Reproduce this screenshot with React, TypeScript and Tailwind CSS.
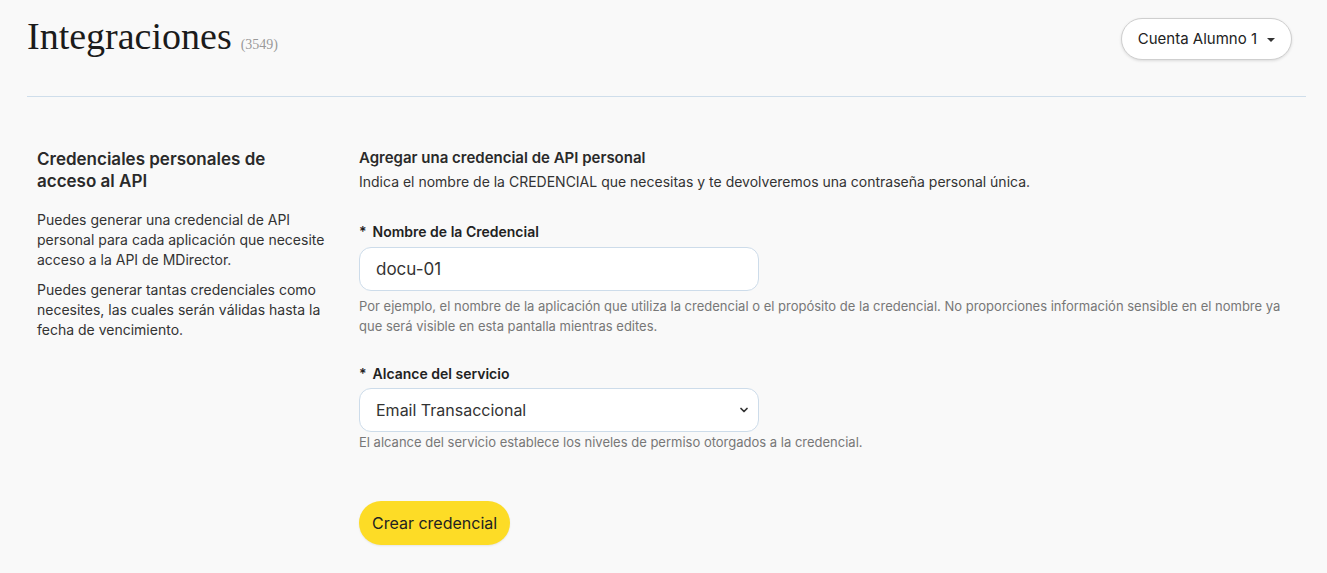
import { ChevronDown } from "lucide-react";

export default function App() {
  return (
    <div className="min-h-screen bg-[#f9f9f9] text-[#333] font-['Inter',sans-serif]">
      <header className="flex items-start justify-between px-[27px] pt-[18px] pr-[35px]">
        <div className="flex items-baseline gap-[9px]">
          <h1 className="font-['Liberation_Serif',serif] text-[38px] leading-[36px] text-[#1b1b1b]">Integraciones</h1>
          <span className="font-['Liberation_Serif',serif] text-[14px] text-[#9a9a9a]">(3549)</span>
        </div>
        <button
          type="button"
          className="flex h-[42px] items-center gap-[10px] rounded-full border border-[#cfcfcf] bg-white px-[16px] text-[15px] text-[#222] shadow-[0_1px_3px_rgba(0,0,0,0.12)]"
        >
          Cuenta Alumno 1
          <span className="mt-[1px] h-0 w-0 border-x-[4px] border-t-[4px] border-x-transparent border-t-[#333]" />
        </button>
      </header>

      <div className="mx-[27px] mt-[36px] mr-[21px] border-t border-[#cfdeeb]" />

      <main className="flex pt-[51px]">
        <aside className="w-[359px] shrink-0 pl-[37px] pr-[34px]">
          <h2 className="text-[17px] font-semibold leading-[22px] text-[#2a2a2a]">
            Credenciales personales de acceso al API
          </h2>
          <p className="mt-[18px] text-[14px] leading-[20px]">
            Puedes generar una credencial de API personal para cada aplicación que necesite acceso a la API de MDirector.
          </p>
          <p className="mt-[10px] text-[14px] leading-[20px]">
            Puedes generar tantas credenciales como necesites, las cuales serán válidas hasta la fecha de vencimiento.
          </p>
        </aside>

        <section className="flex-1 pr-[40px]">
          <h3 className="text-[15px] font-semibold leading-[20px] text-[#2a2a2a]">Agregar una credencial de API personal</h3>
          <p className="mt-[4px] text-[14px] leading-[20px]">
            Indica el nombre de la CREDENCIAL que necesitas y te devolveremos una contraseña personal única.
          </p>

          <label className="mt-[30px] block text-[14px] font-semibold leading-[20px] text-[#222]">
            <span className="mr-[6px]">*</span>Nombre de la Credencial
          </label>
          <input
            readOnly
            value="docu-01"
            className="mt-[5px] block h-[44px] w-[400px] rounded-[12px] border border-[#cddcea] bg-white px-[16px] text-[17px] text-[#333] outline-none"
          />
          <p className="mt-[5px] text-[13px] leading-[20px] text-[#777]">
            Por ejemplo, el nombre de la aplicación que utiliza la credencial o el propósito de la credencial. No proporciones información sensible en el nombre ya que será visible en esta pantalla mientras edites.
          </p>

          <label className="mt-[28px] block text-[14px] font-semibold leading-[20px] text-[#222]">
            <span className="mr-[6px]">*</span>Alcance del servicio
          </label>
          <div className="relative mt-[4px] w-[400px]">
            <select className="block h-[44px] w-full appearance-none rounded-[12px] border border-[#cddcea] bg-white px-[16px] text-[16px] text-[#333] outline-none">
              <option>Email Transaccional</option>
            </select>
            <ChevronDown className="pointer-events-none absolute right-[9px] top-[16px] h-[12px] w-[12px] text-[#333]" strokeWidth={3.5} />
          </div>
          <p className="text-[13px] leading-[20px] text-[#777]">
            El alcance del servicio establece los niveles de permiso otorgados a la credencial.
          </p>

          <button
            type="button"
            className="mt-[49px] h-[44px] rounded-full bg-[#fddc26] px-[13px] text-[16px] text-[#222] shadow-[0_1px_2px_rgba(0,0,0,0.08)]"
          >
            Crear credencial
          </button>
        </section>
      </main>
    </div>
  );
}
